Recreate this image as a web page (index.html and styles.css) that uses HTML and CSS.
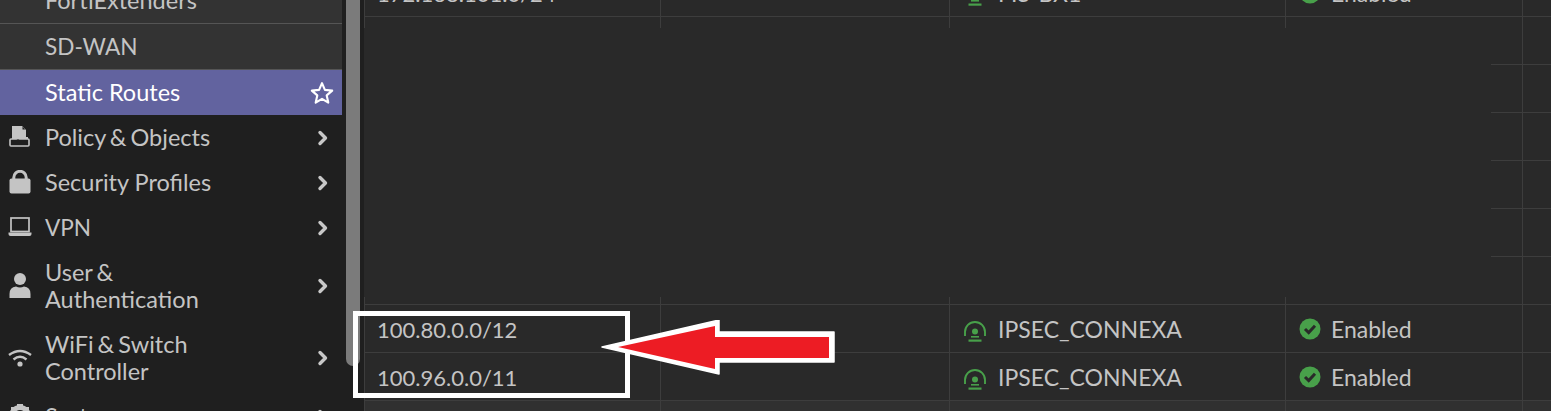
FILE: index.html
```html
<!DOCTYPE html>
<html lang="en">
<head>
  <meta charset="UTF-8">
  <title>Static Routes</title>
  <link rel="stylesheet" href="styles.css">
</head>
<body>
  <svg class="defs" width="0" height="0">
    <symbol id="chevron" viewBox="0 0 12 16">
      <path d="M3 2.5 L8.5 8 L3 13.5" fill="none" stroke="currentColor" stroke-width="3.4" stroke-linecap="round" stroke-linejoin="round"/>
    </symbol>
    <symbol id="tunnel" viewBox="0 0 22 22">
      <path d="M1 15 V11 A10 10 0 0 1 21 11 V15" fill="none" stroke="currentColor" stroke-width="1.9"/>
      <circle cx="11" cy="10.5" r="3"/>
      <rect x="7" y="15" width="8" height="1.6"/>
      <rect x="4.5" y="18.5" width="13" height="2.2"/>
    </symbol>
    <symbol id="check" viewBox="0 0 22 22">
      <circle cx="11" cy="11" r="10.5" fill="#48a04a"/>
      <path d="M6 11 L9.7 14.6 L16 7.8" fill="none" stroke="#292929" stroke-width="3"/>
    </symbol>
  </svg>

  <nav class="sidebar">
    <div class="nav-sub">FortiExtenders</div>
    <div class="nav-sub nav-caps">SD-WAN</div>
    <div class="nav-active">
      <span>Static Routes</span>
      <svg class="star" viewBox="0 0 24 24"><path d="M12 2.2 L14.9 8.9 L22.2 9.6 L16.7 14.4 L18.3 21.6 L12 17.8 L5.7 21.6 L7.3 14.4 L1.8 9.6 L9.1 8.9 Z" fill="none" stroke="#fff" stroke-width="2.1" stroke-linejoin="round"/></svg>
    </div>
    <div class="nav-item">
      <svg class="nav-icon" viewBox="0 0 24 25">
        <path d="M4 1 H14 L18 5 V14 H4 Z" fill="currentColor"/>
        <path d="M14.5 1.8 L17.2 4.6 H14.5 Z" fill="#1f1f1f"/>
        <path d="M3 14 H8 Q10 13 12 14 H20 Q21 14 21 15 V20 Q21 21 20 21 H3 Q2 21 2 20 V15 Q2 14 3 14 Z" fill="none" stroke="currentColor" stroke-width="1.6"/>
        <path d="M4 14 H20 V12 H11 Q9 12 8 14 Z" fill="currentColor"/>
      </svg>
      <span class="nav-label nav-amp">Policy &amp; Objects</span>
      <svg class="chevron"><use href="#chevron"/></svg>
    </div>
    <div class="nav-item">
      <svg class="nav-icon" viewBox="0 0 24 25">
        <path d="M5.8 9 V7.5 A6.2 6.2 0 0 1 18.2 7.5 V9" fill="none" stroke="currentColor" stroke-width="3"/>
        <rect x="1.5" y="8.5" width="21" height="15" rx="2" fill="currentColor"/>
      </svg>
      <span class="nav-label">Security Profiles</span>
      <svg class="chevron"><use href="#chevron"/></svg>
    </div>
    <div class="nav-item">
      <svg class="nav-icon" viewBox="0 0 24 25">
        <rect x="3" y="3" width="18" height="13.5" fill="none" stroke="currentColor" stroke-width="1.7"/>
        <path d="M0.5 17.5 H23.5 V19 Q23.5 21 21.5 21 H2.5 Q0.5 21 0.5 19 Z" fill="currentColor"/>
      </svg>
      <span class="nav-label nav-caps">VPN</span>
      <svg class="chevron"><use href="#chevron"/></svg>
    </div>
    <div class="nav-item">
      <svg class="nav-icon nav-icon-tall" viewBox="0 0 24 26">
        <circle cx="12" cy="6" r="6"/>
        <path d="M1.5 25 V21 Q1.5 14 8 13.5 Q12 15.5 16 13.5 Q22.5 14 22.5 21 V25 Z"/>
      </svg>
      <span class="nav-label nav-amp">User &amp;<br>Authentication</span>
      <svg class="chevron"><use href="#chevron"/></svg>
    </div>
    <div class="nav-item">
      <svg class="nav-icon nav-icon-tall" viewBox="0 0 24 26">
        <path d="M1 10 Q12 2 23 10" fill="none" stroke="currentColor" stroke-width="2.4"/>
        <path d="M5.5 14.5 Q12 9 18.5 14.5" fill="none" stroke="currentColor" stroke-width="2.4"/>
        <circle cx="12" cy="19" r="2.6"/>
      </svg>
      <span class="nav-label nav-amp">WiFi &amp; Switch<br>Controller</span>
      <svg class="chevron"><use href="#chevron"/></svg>
    </div>
    <div class="nav-item">
      <svg class="nav-icon" viewBox="0 0 24 25">
        <circle cx="12" cy="12" r="8.5" fill="none" stroke="currentColor" stroke-width="5"/>
        <path d="M9 0 H15 V5 H9 Z M0 9 H5 V15 H0 Z M19 9 H24 V15 H19 Z M3 3 L7 3 L7 7 L3 7 Z M17 3 L21 3 L21 7 L17 7 Z" fill="currentColor"/>
      </svg>
      <span class="nav-label">System</span>
      <svg class="chevron"><use href="#chevron"/></svg>
    </div>
  </nav>

  <div class="scroll-track"><div class="scroll-thumb"></div></div>

  <main class="table">
    <div class="row row-first">
      <div class="cell">172.168.101.0/24</div>
      <div class="cell"></div>
      <div class="cell"><svg class="tunnel-icon"><use href="#tunnel"/></svg><span class="cell-name">FIS-BX1</span></div>
      <div class="cell"><svg class="check-icon"><use href="#check"/></svg><span class="cell-name">Enabled</span></div>
      <div class="cell"></div>
    </div>
    <div class="row stub stub-top">
      <div class="cell"></div><div class="cell"></div><div class="cell"></div><div class="cell"></div><div class="cell"></div>
    </div>

    <div class="blank">
      <div class="ghost ghost-first"><div class="ghost-cell"></div></div>
      <div class="ghost"><div class="ghost-cell"></div></div>
      <div class="ghost"><div class="ghost-cell"></div></div>
      <div class="ghost"><div class="ghost-cell"></div></div>
      <div class="ghost"><div class="ghost-cell"></div></div>
      <div class="ghost ghost-last"><div class="ghost-cell"></div></div>
    </div>

    <div class="row stub stub-bottom">
      <div class="cell"></div><div class="cell"></div><div class="cell"></div><div class="cell"></div><div class="cell"></div>
    </div>
    <div class="row">
      <div class="cell">100.80.0.0/12</div>
      <div class="cell"></div>
      <div class="cell"><svg class="tunnel-icon"><use href="#tunnel"/></svg><span class="cell-name">IPSEC_CONNEXA</span></div>
      <div class="cell"><svg class="check-icon"><use href="#check"/></svg><span class="cell-name">Enabled</span></div>
      <div class="cell"></div>
    </div>
    <div class="row">
      <div class="cell">100.96.0.0/11</div>
      <div class="cell"></div>
      <div class="cell"><svg class="tunnel-icon"><use href="#tunnel"/></svg><span class="cell-name">IPSEC_CONNEXA</span></div>
      <div class="cell"><svg class="check-icon"><use href="#check"/></svg><span class="cell-name">Enabled</span></div>
      <div class="cell"></div>
    </div>
    <div class="row row-foot">
      <div class="cell"></div><div class="cell"></div><div class="cell"></div><div class="cell"></div><div class="cell"></div>
    </div>
  </main>

  <!-- annotation drawn over the screenshot -->
  <div class="callout-box"></div>
  <svg class="callout-arrow" viewBox="0 0 240 60">
    <path d="M2 27 L119 0 V12 H234 V42 H119 V54 Z" fill="#fff" stroke="#fff" stroke-width="1.5" stroke-linejoin="round"/>
    <path d="M18 27 L115 6 V17 H229 V38 H115 V49 Z" fill="#ed1c24"/>
  </svg>
</body>
</html>
```

FILE: styles.css
```css
html, body {
  height: 100%;
  overflow: hidden;
}
body {
  margin: 0;
  display: flex;
  align-items: flex-start;
  background: #1f1f1f;
  color: #c4c4c4;
  font-family: Lato, "Open Sans", sans-serif;
  font-size: 22px;
  line-height: 27px;
}
.defs { position: absolute; }

/* sidebar */
.sidebar {
  width: 342px;
  flex: none;
  margin-top: -22px;
  background: #1f1f1f;
  font-size: 23.5px;
}
.nav-caps { font-size: 22.6px; }
.nav-amp { word-spacing: -2px; }
.nav-sub {
  padding: 9px 0 9px 45px;
  background: #333;
  border-bottom: 1px solid #555;
}
.nav-active {
  display: flex;
  align-items: center;
  justify-content: space-between;
  padding: 9px 8px 9px 45px;
  background: #62639f;
  color: #fff;
}
.star { width: 24px; height: 24px; }
.nav-item {
  display: flex;
  align-items: center;
  padding: 9px 13px 9px 8px;
}
.nav-icon {
  width: 24px;
  height: 25px;
  flex: none;
  margin-right: 13px;
  fill: currentColor;
}
.nav-icon-tall { height: 26px; }
.nav-label { flex: 1; }
.chevron {
  width: 12px;
  height: 16px;
  flex: none;
  color: #c8c8c8;
}

/* scrollbar between the sidebar and the table */
.scroll-track {
  width: 22px;
  height: 100%;
  flex: none;
  padding-left: 4px;
  box-sizing: border-box;
}
.scroll-thumb {
  width: 14px;
  height: 366px;
  background: #7b7b7b;
  border-radius: 0 0 7px 7px;
}

/* table */
.table {
  flex: 1;
  margin-top: -31px;
  background: #292929;
}
.row {
  display: grid;
  grid-template-columns: 296px 289px 336px 237px 1fr;
  height: 48px;
  box-sizing: border-box;
  border-left: 1px solid #3d3d3d;
  border-bottom: 1px solid #3d3d3d;
}
.cell {
  display: flex;
  align-items: center;
  padding: 2px 0 0 12px;
  border-right: 1px solid #3d3d3d;
  white-space: nowrap;
  overflow: hidden;
}
.cell:last-child { border-right: none; }
.cell-name { font-size: 23px; }
.stub { border-bottom: none; }
.stub-top { height: 11px; }
.stub-bottom { height: 8px; border-bottom: 1px solid #3d3d3d; }
.row-foot {
  height: 60px;
  background: #303030;
  border-bottom: none;
}
.tunnel-icon {
  width: 22px;
  height: 22px;
  margin: 4px 12px 0 2px;
  flex: none;
  color: #48a04a;
  fill: currentColor;
}
.check-icon {
  width: 22px;
  height: 22px;
  margin: 0 10px 2px 1px;
  flex: none;
}

.blank {
  display: flex;
  flex-direction: column;
  align-items: flex-end;
  height: 269px;
}
.ghost {
  width: 60px;
  height: 48px;
  box-sizing: border-box;
  border-bottom: 1px solid #3d3d3d;
}
.ghost-first { height: 37px; }
.ghost-last { height: 40px; border-bottom: none; }
.ghost-cell {
  width: 32px;
  height: 100%;
  box-sizing: border-box;
  border-right: 1px solid #3d3d3d;
}

/* annotation */
.callout-box {
  position: absolute;
  left: 353px;
  top: 311px;
  width: 267px;
  height: 77px;
  border: 5px solid #fff;
}
.callout-arrow {
  position: absolute;
  left: 600px;
  top: 320px;
  width: 240px;
  height: 60px;
}
```
